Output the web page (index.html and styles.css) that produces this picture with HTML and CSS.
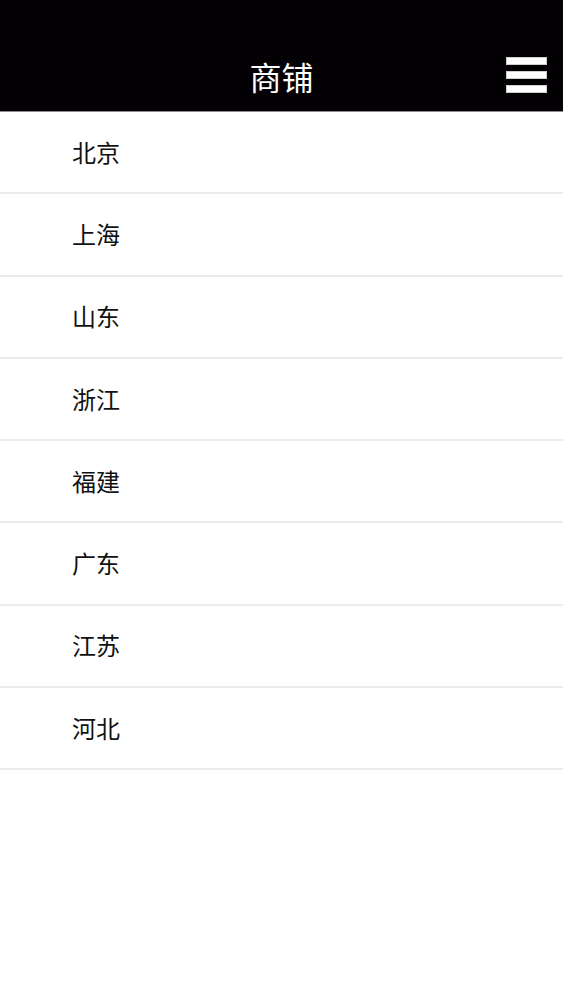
FILE: index.html
```html
<!DOCTYPE html>
<html lang="zh">
<head>
    <meta charset="utf-8">
    <meta name="viewport" content="width=device-width, initial-scale=1">
    <title>商铺</title>
    <link rel="stylesheet" href="styles.css">
</head>
<body>
    <div class="top-bar">
        <div class="status-space"></div>
        <div class="nav-bar">
            <h1 class="nav-title">商铺</h1>
            <button class="menu-btn" aria-label="菜单">
                <span></span><span></span><span></span>
            </button>
        </div>
    </div>

    <ul class="region-list">
        <li class="region-item">北京</li>
        <li class="region-item">上海</li>
        <li class="region-item">山东</li>
        <li class="region-item">浙江</li>
        <li class="region-item">福建</li>
        <li class="region-item">广东</li>
        <li class="region-item">江苏</li>
        <li class="region-item">河北</li>
    </ul>
</body>
</html>
```

FILE: styles.css
```css
body {
    margin: 0;
    background: #ffffff;
    color: #111111;
    font-family: "Noto Sans CJK SC", "Noto Sans", sans-serif;
}

.top-bar {
    background: #030104;
    border-bottom: 1px solid #8a8a8a;
}

.status-space {
    height: 40px;
}

.nav-bar {
    position: relative;
    height: 71px;
    display: flex;
    align-items: center;
    justify-content: center;
}

.nav-title {
    margin: 0;
    color: #ffffff;
    font-size: 32px;
    font-weight: normal;
    line-height: 1;
}

.menu-btn {
    position: absolute;
    right: 16px;
    top: 17px;
    width: 41px;
    padding: 0;
    background: none;
    border: none;
    display: flex;
    flex-direction: column;
    gap: 6px;
    cursor: pointer;
}

.menu-btn span {
    display: block;
    height: 8px;
    background: #ffffff;
    border: 1px solid #cfcfcf;
    box-sizing: border-box;
}

.region-list {
    list-style: none;
    margin: 0;
    padding: 0;
}

.region-item {
    height: 82.3px;
    display: flex;
    align-items: center;
    padding-left: 72px;
    padding-bottom: 2px;
    box-sizing: border-box;
    font-size: 24px;
    border-bottom: 2px solid #ececec;
}
```
